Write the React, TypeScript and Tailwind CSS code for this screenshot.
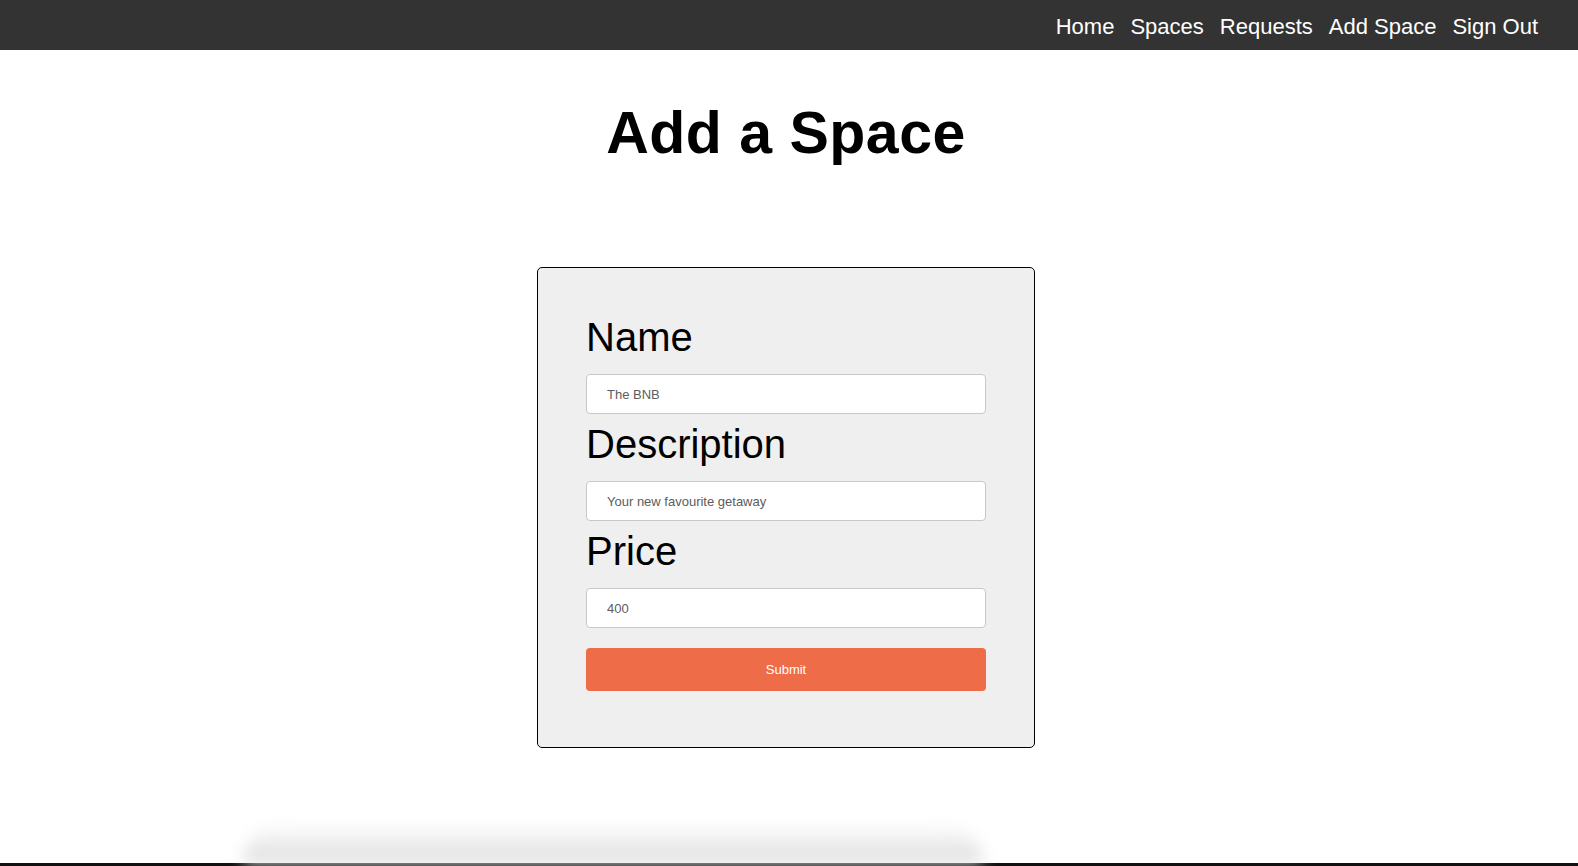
const links = ['Home', 'Spaces', 'Requests', 'Add Space', 'Sign Out']

const fields = [
  { label: 'Name', placeholder: 'The BNB' },
  { label: 'Description', placeholder: 'Your new favourite getaway' },
  { label: 'Price', placeholder: '400' },
]

const Field = ({ label, placeholder }: { label: string; placeholder: string }) => {
  return (
    <div className="flex flex-col">
      <label className="mb-[15px] pt-[1px] text-[40px] leading-[43px] text-black">{label}</label>
      <input
        type="text"
        placeholder={placeholder}
        className="mb-[8px] h-[40px] w-full rounded-[4px] border border-[#c8c8c8] bg-white px-[20px] text-[13px] text-[#555] placeholder-[#5c5c5c] outline-none"
      />
    </div>
  )
}

export default function App() {
  return (
    <div className="flex h-screen flex-col overflow-hidden bg-white font-['Liberation_Sans',Arial,sans-serif]">
      <nav className="flex h-[50px] shrink-0 items-center justify-end gap-[16px] bg-[#333333] pt-[2px] pr-[40px]">
        {links.map((link) => (
          <a key={link} href="#" className="text-[22px] leading-[25px] text-white">
            {link}
          </a>
        ))}
      </nav>

      <main className="flex flex-1 flex-col items-center pr-[6px]">
        <h1 className="mt-[50px] text-[59px] leading-[66px] font-bold tracking-[0.5px] text-black">Add a Space</h1>

        <form className="mt-[101px] w-[498px] rounded-[5px] border border-black bg-[#efefef] px-[48px] pt-[47px] pb-[56px]">
          {fields.map((field) => (
            <Field key={field.label} {...field} />
          ))}
          <button
            type="button"
            className="mt-[12px] h-[43px] w-full rounded-[4px] bg-[#ee6c47] text-[13px] text-white"
          >
            Submit
          </button>
        </form>
      </main>

      <div className="flex h-[44px] shrink-0 flex-col justify-end">
        <div className="ml-[243px] h-[40px] w-[740px] rounded-t-[40px] bg-gradient-to-b from-white to-[#dcdcdc] blur-[8px]" />
        <div className="h-[3px] bg-[#111]" />
      </div>
    </div>
  )
}
